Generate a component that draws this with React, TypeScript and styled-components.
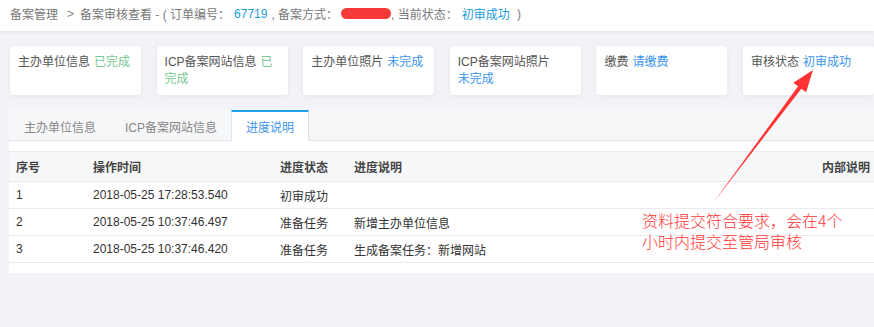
import React from "react";
import styled, { createGlobalStyle } from "styled-components";

const GlobalStyle = createGlobalStyle`
  html, body {
    margin: 0;
    padding: 0;
    background: #f3f3f7;
    font-family: "Liberation Sans", "Noto Sans CJK SC", sans-serif;
    font-size: 12px;
    color: #333;
    overflow: hidden;
  }
`;

// Styles
const Page = styled.div`
  position: relative;
  width: 874px;
  height: 327px;
  overflow: hidden;
`;

const Breadcrumb = styled.div`
  height: 31px;
  background: #fff;
  box-shadow: 0 1px 3px rgba(0, 0, 0, 0.07);
  display: flex;
  align-items: center;
  padding: 0 0 4px 10px;
  box-sizing: border-box;
  color: #777;
  font-size: 12px;
  white-space: pre;
`;

const Sep = styled.span`
  margin: 0 6px 0 9px;
  color: #888;
`;

const Hl = styled.span`
  color: #1a9be2;
  margin: 0 4px;
`;

const Redacted = styled.span`
  display: inline-block;
  width: 50px;
  height: 11px;
  border-radius: 6px;
  background: #f63a3a;
  margin-left: 3px;
`;

const Content = styled.div`
  padding: 15px 0 0 9px;
`;

const CardRow = styled.div`
  display: grid;
  grid-template-columns: repeat(6, 131px);
  column-gap: 15.6px;
  margin-left: 1px;
`;

const Card = styled.div`
  height: 49px;
  box-sizing: border-box;
  background: #fff;
  border-radius: 3px;
  box-shadow: 0 1px 4px rgba(40, 40, 80, 0.08);
  padding: 8px 8px 0 8px;
  line-height: 17px;
  color: #555;
`;

const Status = styled.span<{ $tone: "done" | "todo"; $newline?: boolean }>`
  color: ${(p) => (p.$tone === "done" ? "#75c98f" : "#3b94ec")};
  margin-left: ${(p) => (p.$newline ? "0" : "4px")};
  display: ${(p) => (p.$newline ? "block" : "inline")};
`;

const TabBar = styled.div`
  margin-top: 15px;
  height: 31px;
  box-sizing: border-box;
  display: flex;
  background: #f6f7f9;
  border-bottom: 1px solid #dfe3ea;
`;

const Tab = styled.div<{ $active?: boolean }>`
  padding: 0 14px;
  display: flex;
  align-items: center;
  height: 31px;
  box-sizing: border-box;
  color: ${(p) => (p.$active ? "#3b94ec" : "#888")};
  background: ${(p) => (p.$active ? "#fff" : "transparent")};
  border-top: 2px solid ${(p) => (p.$active ? "#1fa0f0" : "transparent")};
  border-left: 1px solid ${(p) => (p.$active ? "#dfe3ea" : "transparent")};
  border-right: 1px solid ${(p) => (p.$active ? "#dfe3ea" : "transparent")};
  margin-right: -1px;
`;

const Panel = styled.div`
  background: #fff;
  padding: 10px 0 10px 0;
`;

const Row = styled.div<{ $head?: boolean }>`
  display: grid;
  grid-template-columns: 77px 187px 74px 1fr auto;
  align-items: center;
  padding: 0 4px 0 7px;
  height: ${(p) => (p.$head ? "29px" : "26px")};
  border-bottom: 1px solid #e8eaee;
  border-top: ${(p) => (p.$head ? "1px solid #e8eaee" : "none")};
  background: ${(p) => (p.$head ? "#f7f8fa" : "#fff")};
  font-weight: ${(p) => (p.$head ? "bold" : "normal")};
  color: ${(p) => (p.$head ? "#444" : "#333")};
`;

const Note = styled.div`
  position: absolute;
  left: 642px;
  top: 210px;
  color: #ff3636;
  font-size: 16px;
  line-height: 21px;
  font-family: "Noto Sans CJK SC", sans-serif;
  font-weight: 300;
`;

const Arrow = styled.svg`
  position: absolute;
  left: 0;
  top: 0;
  pointer-events: none;
`;

const cards = [
  { label: "主办单位信息", status: "已完成", tone: "done" as const },
  { label: "ICP备案网站信息", status: "已完成", tone: "done" as const },
  { label: "主办单位照片", status: "未完成", tone: "todo" as const },
  { label: "ICP备案网站照片", status: "未完成", tone: "todo" as const, newline: true },
  { label: "缴费", status: "请缴费", tone: "todo" as const },
  { label: "审核状态", status: "初审成功", tone: "todo" as const },
];

const rows = [
  ["1", "2018-05-25 17:28:53.540", "初审成功", ""],
  ["2", "2018-05-25 10:37:46.497", "准备任务", "新增主办单位信息"],
  ["3", "2018-05-25 10:37:46.420", "准备任务", "生成备案任务：新增网站"],
];

// Component
const App: React.FC = () => {
  return (
    <Page>
      <GlobalStyle />
      <Breadcrumb>
        备案管理<Sep>&gt;</Sep>备案审核查看 - ( 订单编号：<Hl>67719</Hl>, 备案方式：
        <Redacted />, 当前状态：<Hl>初审成功</Hl> )
      </Breadcrumb>
      <Content>
        <CardRow>
          {cards.map((c) => (
            <Card key={c.label}>
              {c.label}
              <Status $tone={c.tone} $newline={c.newline}>
                {c.status}
              </Status>
            </Card>
          ))}
        </CardRow>
        <TabBar>
          <Tab>主办单位信息</Tab>
          <Tab>ICP备案网站信息</Tab>
          <Tab $active>进度说明</Tab>
        </TabBar>
        <Panel>
          <Row $head>
            <span>序号</span>
            <span>操作时间</span>
            <span>进度状态</span>
            <span>进度说明</span>
            <span>内部说明</span>
          </Row>
          {rows.map((r) => (
            <Row key={r[0]}>
              <span>{r[0]}</span>
              <span>{r[1]}</span>
              <span>{r[2]}</span>
              <span>{r[3]}</span>
              <span />
            </Row>
          ))}
        </Panel>
      </Content>
      <Arrow width="874" height="327" viewBox="0 0 874 327">
        <polygon
          points="713,203 798.1,86.3 793.3,82.7 813,70 806.1,92.3 801.3,88.7"
          fill="#ff3333"
        />
      </Arrow>
      <Note>
        资料提交符合要求，会在4个
        <br />
        小时内提交至管局审核
      </Note>
    </Page>
  );
};

export default App;
